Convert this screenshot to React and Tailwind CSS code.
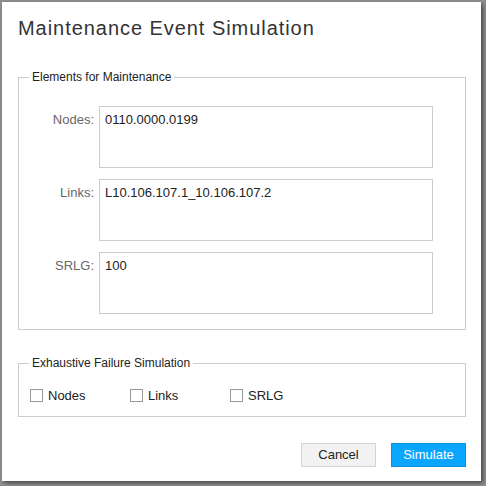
export default function App() {
  const rows = [
    { label: "Nodes:", value: "0110.0000.0199" },
    { label: "Links:", value: "L10.106.107.1_10.106.107.2" },
    { label: "SRLG:", value: "100" },
  ];
  const checks = ["Nodes", "Links", "SRLG"];

  return (
    <div className="w-[486px] h-[486px] bg-[#8f8f8f] pl-[2px] pt-[2px] font-['Liberation_Sans',Arial,sans-serif]">
      <div className="w-[479px] h-[479px] bg-white shadow-[2px_2px_4px_rgba(0,0,0,0.5)] relative">
        <h1 className="pl-[16px] pt-[14px] text-[20px] leading-[24px] text-[#333] tracking-[0.95px]">
          Maintenance Event Simulation
        </h1>

        <fieldset className="mt-[30px] ml-[16px] w-[448px] h-[260px] border border-[#cccccc]">
          <legend className="ml-[10px] px-[3px] text-[12px] leading-[14px] text-[#222]">
            Elements for Maintenance
          </legend>
          <div className="flex flex-col gap-[11px] pt-[22px]">
            {rows.map((r) => (
              <div key={r.label} className="flex">
                <label className="w-[75px] text-right pt-[6px] text-[13px] leading-[15px] text-[#666]">
                  {r.label}
                </label>
                <textarea
                  className="ml-[5px] w-[334px] h-[62px] border border-[#cccccc] px-[5px] pt-[5px] pb-[3px] text-[13px] leading-[15px] text-[#222] resize-none outline-none"
                  defaultValue={r.value}
                />
              </div>
            ))}
          </div>
        </fieldset>

        <fieldset className="mt-[26px] ml-[16px] w-[448px] h-[61px] border border-[#cccccc]">
          <legend className="ml-[10px] px-[3px] text-[12px] leading-[14px] text-[#222]">
            Exhaustive Failure Simulation
          </legend>
          <div className="flex pl-[11px] pt-[18px]">
            {checks.map((c) => (
              <label key={c} className="w-[100px] flex items-center gap-[5px] text-[13px] leading-[15px] text-[#222]">
                <span className="w-[13px] h-[13px] border border-[#999] bg-white" />
                {c}
              </label>
            ))}
          </div>
        </fieldset>

        <div className="flex justify-end gap-[15px] pr-[15px] mt-[26px]">
          <button className="w-[75px] h-[24px] bg-[#f2f2f2] border border-[#d4d4d4] text-[13px] text-[#222]">
            Cancel
          </button>
          <button className="w-[75px] h-[24px] bg-[#0aa5ff] border border-[#0a90e0] text-[13px] text-white">
            Simulate
          </button>
        </div>
      </div>
    </div>
  );
}
